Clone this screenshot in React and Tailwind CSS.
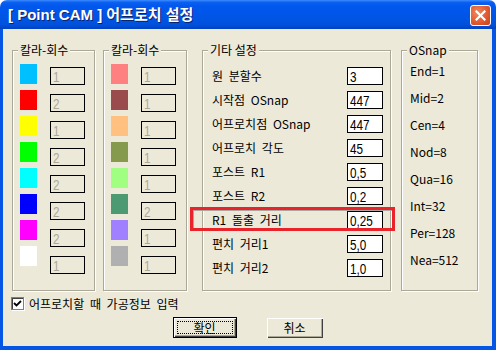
const leftColors = [
  ['#00C0FF', '1'],
  ['#FF0000', '2'],
  ['#FFFF00', '1'],
  ['#00FF00', '2'],
  ['#00FFFF', '2'],
  ['#0000FF', '2'],
  ['#FF00FF', '2'],
  ['#FFFFFF', '1'],
];

const rightColors = [
  ['#FF8080', '1'],
  ['#9A4C4C', '1'],
  ['#FFC080', '1'],
  ['#859A4C', '1'],
  ['#A0FF80', '1'],
  ['#4C9A72', '2'],
  ['#A080FF', '1'],
  ['#B0B0B0', '1'],
];

const etcRows = [
  ['원 분할수', '3'],
  ['시작점 OSnap', '447'],
  ['어프로치점 OSnap', '447'],
  ['어프로치 각도', '45'],
  ['포스트 R1', '0,5'],
  ['포스트 R2', '0,2'],
  ['R1 돌출 거리', '0,25'],
  ['편치 거리1', '5,0'],
  ['편치 거리2', '1,0'],
];

const osnap = ['End=1', 'Mid=2', 'Cen=4', 'Nod=8', 'Qua=16', 'Int=32', 'Per=128', 'Nea=512'];

function Group({ label, className, children }) {
  return (
    <fieldset
      className={`border border-[#ACA899] shadow-[1px_1px_0_#fff,inset_1px_1px_0_#fff] min-w-0 ${className}`}
    >
      <legend className="ml-[5px] px-[2px] leading-[14px] bg-[#ECE9D8]">{label}</legend>
      {children}
    </fieldset>
  );
}

function Num({ value, disabled }) {
  return (
    <div
      className={`h-[18px] border border-black pl-[2px] flex items-center overflow-hidden font-['Liberation_Sans',sans-serif] text-[15px] leading-none ${
        disabled ? 'w-[35px] text-[#ACA899]' : 'w-[36px] bg-white text-black'
      }`}
    >
      <span className="inline-block origin-left scale-x-[0.78]">{value}</span>
    </div>
  );
}

function ColorGroup({ label, colors, className }) {
  return (
    <Group label={label} className={className}>
      <div className="flex pl-[7px]">
        <div className="flex flex-col gap-[6px] mt-[7px]">
          {colors.map(([c], i) => (
            <div key={i} className="w-[17px] h-[20px]" style={{ backgroundColor: c }} />
          ))}
        </div>
        <div className="flex flex-col gap-[9px] mt-[10px] ml-[13px]">
          {colors.map(([, v], i) => (
            <Num key={i} value={v} disabled />
          ))}
        </div>
      </div>
    </Group>
  );
}

export default function App() {
  return (
    <div className="w-[496px] h-[350px] bg-white font-['Noto_Sans_CJK_KR',sans-serif] text-[12px] text-black">
      <div className="flex flex-col h-full rounded-t-[7px] overflow-hidden">
        {/* title bar */}
        <div className="h-[29px] shrink-0 flex items-start pl-[8px] pr-[5px] bg-[linear-gradient(to_bottom,#3C8CFF_0%,#0B60F0_8%,#0058EE_20%,#0055E5_60%,#0051DD_85%,#0043C0_100%)]">
          <span className="flex-1 pt-[5px] text-white font-bold text-[15px] leading-[19px] font-['Liberation_Sans','Noto_Sans_CJK_KR',sans-serif] [text-shadow:1px_1px_0_#0A246A]">
            [ Point CAM ] 어프로치 설정
          </span>
          <div className="mt-[5px] w-[21px] h-[21px] rounded-[3px] border border-white bg-[radial-gradient(circle_at_35%_35%,#F08A60_0%,#E25A30_55%,#C8401E_100%)] flex items-center justify-center">
            <svg width="11" height="11" viewBox="0 0 11 11">
              <path d="M1.5 1.5 L9.5 9.5 M9.5 1.5 L1.5 9.5" stroke="#fff" strokeWidth="2.2" strokeLinecap="square" />
            </svg>
          </div>
        </div>

        {/* body */}
        <div className="relative flex-1 flex flex-col bg-[#ECE9D8] border-l-[3px] border-r-4 border-b-4 border-[#0556E4] pt-[14px]">
          <div className="flex h-[248px] pl-[9px]">
            <ColorGroup label="칼라-회수" colors={leftColors} className="w-[83px]" />
            <ColorGroup label="칼라-회수" colors={rightColors} className="w-[84px] ml-[8px]" />

            <Group label="기타 설정" className="w-[189px] ml-[15px]">
              <div className="flex flex-col gap-[6px] mt-[10px] pl-[9px] pr-[7px]">
                {etcRows.map(([label, v]) => (
                  <div key={label} className="h-[18px] flex items-center justify-between">
                    <span className="[word-spacing:3px]">{label}</span>
                    <Num value={v} />
                  </div>
                ))}
              </div>
            </Group>

            <Group label="OSnap" className="w-[77px] ml-[10px]">
              <div className="flex flex-col pl-[8px]">
                {osnap.map((t) => (
                  <div key={t} className="h-[27px] flex items-center">
                    {t}
                  </div>
                ))}
              </div>
            </Group>
          </div>

          {/* checkbox */}
          <div className="flex items-center mt-[6px] pl-[8px] h-[13px]">
            <div className="w-[13px] h-[13px] bg-white border border-[#808080] shadow-[inset_1px_1px_0_#404040,1px_1px_0_#fff] flex items-center justify-center">
              <svg width="9" height="9" viewBox="0 0 9 9">
                <path d="M1 4 L3.5 6.5 L8 2" stroke="#000" strokeWidth="1.8" fill="none" />
              </svg>
            </div>
            <span className="ml-[5px] [word-spacing:3px]">어프로치할 때 가공정보 입력</span>
          </div>

          {/* buttons */}
          <div className="flex items-end justify-center gap-[30px] mt-[7px]">
            <button className="w-[64px] h-[21px] border border-black bg-[#ECE9D8] p-[3px] shadow-[inset_1px_1px_0_#fff,inset_-1px_-1px_0_#404040,inset_-2px_-2px_0_#ACA899]">
              <div className="h-full border border-dotted border-black flex items-center justify-center leading-none">
                확인
              </div>
            </button>
            <button className="w-[56px] h-[20px] bg-[#ECE9D8] flex items-center justify-center leading-none shadow-[inset_1px_1px_0_#fff,inset_-1px_-1px_0_#404040,inset_-2px_-2px_0_#ACA899]">
              취소
            </button>
          </div>

          {/* red highlight */}
          <div className="absolute left-[187px] top-[178px] w-[205px] h-[24px] border-[3px] border-[#E8232A] shadow-[inset_1px_1px_0_#A8A8A0]" />
        </div>
      </div>
    </div>
  );
}
